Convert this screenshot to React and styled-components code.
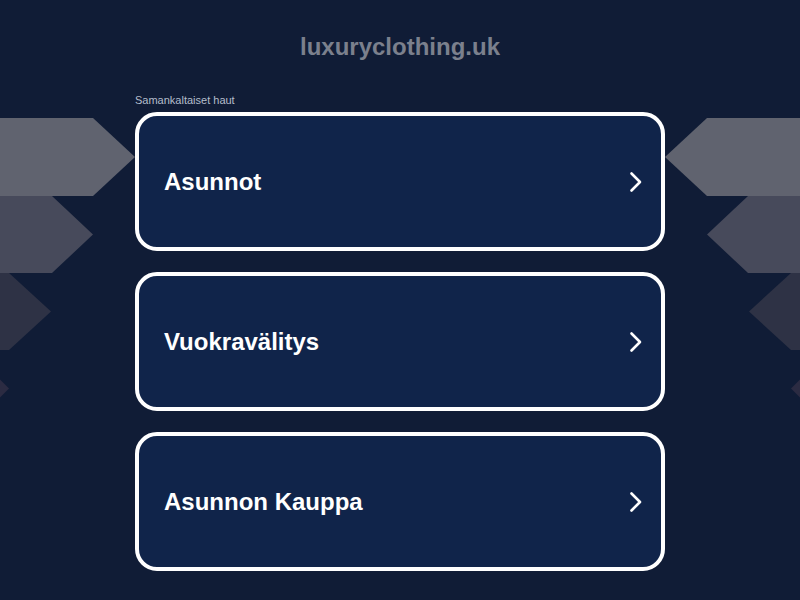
import React from 'react';
import styled, { createGlobalStyle } from 'styled-components';

const GlobalStyle = createGlobalStyle`
  html, body {
    margin: 0;
    padding: 0;
    background: #101c36;
  }
  body {
    font-family: "Liberation Sans", Arial, sans-serif;
  }
`;

const links = ['Asunnot', 'Vuokravälitys', 'Asunnon Kauppa'];

const arrows = [
  { pts: '0,0 93,0 135,39 93,78 0,78', fill: '#60636f' },
  { pts: '0,78 52,78 93,116.5 52,155 0,155', fill: '#474a5b' },
  { pts: '0,155 9,155 51,193.5 9,232 0,232', fill: '#2e3245' },
  { pts: '0,261.5 9,270.5 0,279.5', fill: '#2b2b42' },
];

const Decor = ({ side }) => (
  <DecorLayer side={side} width="135" height="290" viewBox="0 0 135 290">
    {arrows.map((a, i) => (
      <polygon key={i} points={a.pts} fill={a.fill} />
    ))}
  </DecorLayer>
);

const App = () => {
  return (
    <>
      <GlobalStyle />
      <Page>
        <Decor side="left" />
        <Decor side="right" />
        <Title>luxuryclothing.uk</Title>
        <Main>
          <Label>Samankaltaiset haut</Label>
          <List>
            {links.map((text) => (
              <Card key={text} href="#">
                <CardText>{text}</CardText>
                <svg width="14" height="22" viewBox="0 0 14 22">
                  <polyline
                    points="2.5,2.5 11,11 2.5,19.5"
                    fill="none"
                    stroke="#fff"
                    strokeWidth="2.6"
                    strokeLinecap="round"
                    strokeLinejoin="round"
                  />
                </svg>
              </Card>
            ))}
          </List>
        </Main>
      </Page>
    </>
  );
};

const Page = styled.div`
  position: relative;
  width: 800px;
  height: 600px;
  overflow: hidden;
  background: #101c36;
  display: flex;
  flex-direction: column;
  align-items: center;
`;

const DecorLayer = styled.svg`
  position: absolute;
  top: 118px;
  ${(p) => (p.side === 'left' ? 'left: 0;' : 'right: 0; transform: scaleX(-1);')}
`;

const Title = styled.h1`
  margin: 33px 0 0;
  font: 700 24px/28px "Liberation Sans", Arial, sans-serif;
  color: #7b808d;
`;

const Main = styled.div`
  position: relative;
  width: 530px;
  margin-top: 33px;
`;

const Label = styled.div`
  font: 11px/13px "Liberation Sans", Arial, sans-serif;
  color: #b4bccb;
  margin-bottom: 5px;
`;

const List = styled.div`
  display: flex;
  flex-direction: column;
  gap: 21px;
`;

const Card = styled.a`
  box-sizing: border-box;
  height: 139px;
  border: 4px solid #fff;
  border-radius: 22px;
  background: #10244a;
  display: flex;
  align-items: center;
  justify-content: space-between;
  padding: 0 18px 0 25px;
  text-decoration: none;
`;

const CardText = styled.span`
  font: 700 24px/28px "Liberation Sans", Arial, sans-serif;
  color: #fff;
`;

export default App;
